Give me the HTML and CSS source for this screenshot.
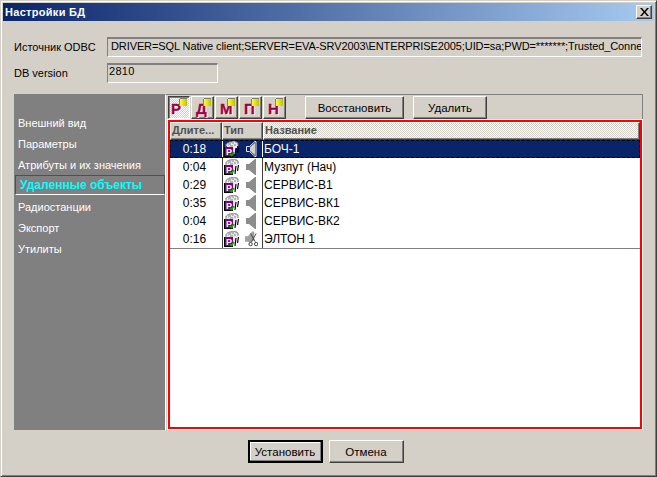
FILE: index.html
```html
<!DOCTYPE html>
<html lang="ru">
<head>
<meta charset="utf-8">
<title>Настройки БД</title>
<link rel="stylesheet" href="styles.css">
</head>
<body>
<svg class="defs" width="0" height="0" aria-hidden="true">
  <symbol id="clip" viewBox="0 0 16 16">
    <path d="M3 2h2V1h3V0h3v1h2v1h1v3h-1v2h-1v6H3V5H2V3h1z" fill="#e8e8e8"/>
    <path d="M3 2h2V1h3V0h3v1h2v1h1v3M2 6V3h1M5 3h2M8 2h2M6 5h3M10 4h2M4 4h1" fill="none" stroke="#808080"/>
    <rect x="0" y="6" width="9" height="10" fill="#800080"/>
    <path d="M0.500 6v10M0 15.500h9" stroke="#000"/>
    <path d="M6 13l1.500 1.500L10 11" fill="none" stroke="#00b000" stroke-width="1.500"/>
    <path d="M12 7l-1 8M14.500 6l-1 6" stroke="#000" stroke-width="1.200" fill="none"/>
  </symbol>
  <symbol id="speaker" viewBox="0 0 13 16">
    <path d="M1 5h3l6-5h1v16h-1l-6-5H1z" fill="#8c8c8c"/>
  </symbol>
  <symbol id="speaker-sel" viewBox="0 0 13 16">
    <path d="M1.500 5.500h3l5.500-5h1v15h-1l-5.500-5h-3z" fill="#0a246a" stroke="#e8e8e8"/>
    <path d="M5 6l5-4v12l-5-4z" fill="#d4d0c8"/>
  </symbol>
  <symbol id="speaker-mute" viewBox="0 0 14 16">
    <path d="M0 5h3l5-5h2v9l-4 3-3-1H0z" fill="#a0a0a0"/>
    <path d="M6 2l5 9M12 2L7 11" stroke="#404040" fill="none"/>
    <circle cx="6" cy="13.500" r="1.800" fill="#fff" stroke="#303030"/>
    <circle cx="12" cy="13.500" r="1.800" fill="#fff" stroke="#303030"/>
  </symbol>
</svg>

<div class="window">
  <header class="titlebar">
    <span class="title">Настройки БД</span>
    <button class="close" aria-label="Закрыть">
      <svg width="9" height="8" viewBox="0 0 9 8"><path d="M0 0h2l2.500 3L7 0h2L5.500 4 9 8H7L4.500 5 2 8H0l3.500-4z" fill="#000"/></svg>
    </button>
  </header>

  <div class="content">
    <div class="field-row">
      <label class="field-label">Источник ODBC</label>
      <div class="field field-wide">DRIVER=SQL Native client;SERVER=EVA-SRV2003\ENTERPRISE2005;UID=sa;PWD=*******;Trusted_Conne</div>
    </div>
    <div class="field-row">
      <label class="field-label">DB version</label>
      <div class="field field-short">2810</div>
    </div>

    <div class="panel">
      <nav class="nav">
        <a class="nav-item">Внешний вид</a>
        <a class="nav-item">Параметры</a>
        <a class="nav-item">Атрибуты и их значения</a>
        <a class="nav-item nav-active">Удаленные объекты</a>
        <a class="nav-item">Радиостанции</a>
        <a class="nav-item">Экспорт</a>
        <a class="nav-item">Утилиты</a>
      </nav>

      <section class="main">
        <div class="toolbar">
          <div class="tool-group">
            <button class="tool tool-on"><span class="tool-letter">Р</span><i class="tool-flag"></i></button>
            <button class="tool"><span class="tool-letter">Д</span><i class="tool-flag"></i></button>
            <button class="tool"><span class="tool-letter">М</span><i class="tool-flag"></i></button>
            <button class="tool"><span class="tool-letter">П</span><i class="tool-flag"></i></button>
            <button class="tool"><span class="tool-letter">Н</span><i class="tool-flag"></i></button>
          </div>
          <button class="btn btn-restore">Восстановить</button>
          <button class="btn btn-delete">Удалить</button>
        </div>

        <div class="list">
          <div class="list-head">
            <div class="head-cell">Длите...</div>
            <div class="head-cell">Тип</div>
            <div class="head-cell head-last">Название</div>
          </div>

          <div class="row row-selected">
            <div class="cell cell-time">0:18</div>
            <div class="cell cell-type"><span class="clip"><svg class="ico-clip"><use href="#clip"/></svg></span><svg class="ico-sound"><use href="#speaker-sel"/></svg></div>
            <div class="cell cell-name">БОЧ-1</div>
          </div>
          <div class="row">
            <div class="cell cell-time">0:04</div>
            <div class="cell cell-type"><span class="clip"><svg class="ico-clip"><use href="#clip"/></svg></span><svg class="ico-sound"><use href="#speaker"/></svg></div>
            <div class="cell cell-name">Музпут (Нач)</div>
          </div>
          <div class="row">
            <div class="cell cell-time">0:29</div>
            <div class="cell cell-type"><span class="clip"><svg class="ico-clip"><use href="#clip"/></svg></span><svg class="ico-sound"><use href="#speaker"/></svg></div>
            <div class="cell cell-name">СЕРВИС-В1</div>
          </div>
          <div class="row">
            <div class="cell cell-time">0:35</div>
            <div class="cell cell-type"><span class="clip"><svg class="ico-clip"><use href="#clip"/></svg></span><svg class="ico-sound"><use href="#speaker"/></svg></div>
            <div class="cell cell-name">СЕРВИС-ВК1</div>
          </div>
          <div class="row">
            <div class="cell cell-time">0:04</div>
            <div class="cell cell-type"><span class="clip"><svg class="ico-clip"><use href="#clip"/></svg></span><svg class="ico-sound"><use href="#speaker"/></svg></div>
            <div class="cell cell-name">СЕРВИС-ВК2</div>
          </div>
          <div class="row row-last">
            <div class="cell cell-time">0:16</div>
            <div class="cell cell-type"><span class="clip"><svg class="ico-clip"><use href="#clip"/></svg></span><svg class="ico-sound"><use href="#speaker-mute"/></svg></div>
            <div class="cell cell-name">ЭЛТОН 1</div>
          </div>
        </div>
      </section>
    </div>

    <footer class="footer">
      <button class="btn btn-foot btn-default">Установить</button>
      <button class="btn btn-foot">Отмена</button>
    </footer>
  </div>
</div>
</body>
</html>
```

FILE: styles.css
```css
* { box-sizing: border-box; }

html, body {
  margin: 0;
  padding: 0;
  background: #d4d0c8;
}

body {
  font-family: "Liberation Sans", Arial, sans-serif;
  font-size: 11px;
  color: #000;
}

.defs { position: absolute; }

.window {
  width: 657px;
  height: 477px;
  padding: 2px;
  overflow: hidden;
  background: #d4d0c8;
  border: 1px solid;
  border-color: #d4d0c8 #404040 #404040 #d4d0c8;
  box-shadow: inset 1px 1px 0 #fff, inset -1px -1px 0 #808080;
}

.titlebar {
  height: 18px;
  display: flex;
  align-items: center;
  justify-content: space-between;
  padding: 0 2px 0 2px;
  background: linear-gradient(90deg, #0a246a, #a6caf0);
}

.title {
  font-size: 11px;
  letter-spacing: 0.3px;
  font-weight: bold;
  color: #fff;
}

.close {
  width: 16px;
  height: 14px;
  padding: 0;
  display: flex;
  align-items: center;
  justify-content: center;
  background: #d4d0c8;
  border: 1px solid;
  border-color: #fff #404040 #404040 #fff;
  box-shadow: inset -1px -1px 0 #808080;
}

.content {
  padding: 16px 0 0 11px;
}

.field-row {
  display: flex;
  margin-bottom: 6px;
}

.field-label {
  width: 93px;
  line-height: 14px;
  align-self: center;
  white-space: nowrap;
}

.field {
  height: 20px;
  border: 1px solid;
  border-color: #808080 #fff #fff #808080;
  border-width: 2px 1px 1px 1px;
  white-space: nowrap;
  overflow: hidden;
}

.field-wide {
  width: 535px;
  padding-left: 3px;
  line-height: 15px;
  letter-spacing: -0.1px;
}

.field-short {
  width: 111px;
  padding-left: 1px;
  line-height: 13px;
  letter-spacing: 0.3px;
}

.panel {
  display: flex;
  width: 629px;
  height: 337px;
  margin-top: 11px;
}

.nav {
  width: 152px;
  height: 336px;
  padding-top: 18px;
  background: #808080;
}

.nav-item {
  display: block;
  height: 21px;
  padding-left: 4px;
  line-height: 22px;
  font-size: 11px;
  color: #fff;
  white-space: nowrap;
}

.nav-active {
  margin: 0 0 1px 1px;
  padding-left: 4px;
  color: #00ffff;
  font-size: 12px;
  font-weight: bold;
  line-height: 18px;
  height: 20px;
  border: 1px solid;
  border-color: #505050 #505050 #fff #505050;
}

.main {
  flex: 1;
  height: 336px;
  padding-left: 2px;
  display: flex;
  flex-direction: column;
  border-left: 1px solid #fff;
  border-top: 1px solid #808080;
  border-right: 1px solid #808080;
}

.toolbar {
  display: flex;
  height: 25px;
  padding-top: 1px;
}

.tool-group {
  display: flex;
  gap: 1px;
  margin-right: 19px;
}

.tool {
  position: relative;
  width: 23px;
  height: 23px;
  padding: 0;
  background: #d4d0c8;
  border: 1px solid;
  border-color: #fff #404040 #404040 #fff;
  box-shadow: inset -1px -1px 0 #808080;
}

.tool-on {
  width: 22px;
  border-color: #404040 #fff #fff #404040;
  box-shadow: inset 1px 1px 0 #808080;
  background: repeating-conic-gradient(#d4d0c8 0 25%, #fff 0 50%) 0 0 / 2px 2px;
}

.tool-letter {
  position: absolute;
  left: 4px;
  top: 4px;
  font-size: 15px;
  line-height: 15px;
  font-weight: bold;
  color: #a00040;
  -webkit-text-stroke: 0.3px #a00040;
  text-shadow: 1px 1px 0 #fff;
}

.tool-on .tool-letter { left: 2px; }

.tool-flag {
  position: absolute;
  right: 2px;
  top: 2px;
  width: 7px;
  height: 7px;
  background: linear-gradient(90deg, #ffff40, #c0c000);
  box-shadow: -1px 0 0 #808080, 0 -1px 0 #808080;
}

.btn {
  height: 23px;
  padding: 0;
  font: 11.500px "Liberation Sans", Arial, sans-serif;
  color: #000;
  background: #d4d0c8;
  border: 1px solid;
  border-color: #fff #404040 #404040 #fff;
  box-shadow: inset -1px -1px 0 #808080;
}

.btn-restore { width: 99px; margin-right: 9px; }
.btn-delete { width: 74px; }

.list {
  width: 474px;
  height: 309px;
  padding: 0 0 2px;
  background: #fff;
  border: 2px solid #f00;
  outline: 1px solid #fff;
}

.list-head {
  display: grid;
  grid-template-columns: 52px 41px 1fr;
  height: 18px;
  background: #d4d0c8;
}

.head-cell {
  padding-left: 1px;
  font-size: 11px;
  font-weight: bold;
  line-height: 15px;
  color: #505050;
  background: #d4d0c8;
  border: 1px solid;
  border-color: #fff #404040 #404040 #fff;
  box-shadow: inset -1px -1px 0 #808080;
}

.head-last {
  background: repeating-conic-gradient(#d4d0c8 0 25%, #fff 0 50%) 0 0 / 2px 2px;
}

.row {
  display: grid;
  grid-template-columns: 52px 41px 1fr;
  height: 18px;
  line-height: 18px;
}

.row-last {
  height: 19px;
  border-bottom: 1px solid #808080;
}

.cell { overflow: hidden; white-space: nowrap; }

.cell-time {
  padding-right: 3px;
  text-align: center;
  font-size: 12px;
}

.cell-type {
  display: flex;
  align-items: center;
  padding-left: 1px;
  border-left: 1px solid #404040;
  border-right: 1px solid #404040;
}

.cell-name {
  padding-left: 1px;
  font-size: 12px;
}

.clip {
  position: relative;
  display: block;
  width: 16px;
  height: 16px;
}

.clip::after {
  content: "P";
  position: absolute;
  left: 2px;
  top: 6px;
  font-size: 9px;
  line-height: 10px;
  font-weight: bold;
  color: #fff;
}

.ico-clip { display: block; width: 16px; height: 16px; }
.ico-sound { width: 13px; height: 16px; margin-left: 5px; }

.row-selected {
  color: #fff;
  background: #0a246a;
  outline: 1px dashed #000;
  outline-offset: -1px;
}

.row-selected .cell-type { border-color: #fff; }

.footer {
  display: flex;
  gap: 6px;
  justify-content: center;
  padding-right: 17px;
  margin-top: 9px;
}

.btn-foot { width: 75px; height: 23px; }

.btn-default {
  border: 2px solid #000;
  box-shadow: inset -1px -1px 0 #808080, inset 1px 1px 0 #fff;
}
```
